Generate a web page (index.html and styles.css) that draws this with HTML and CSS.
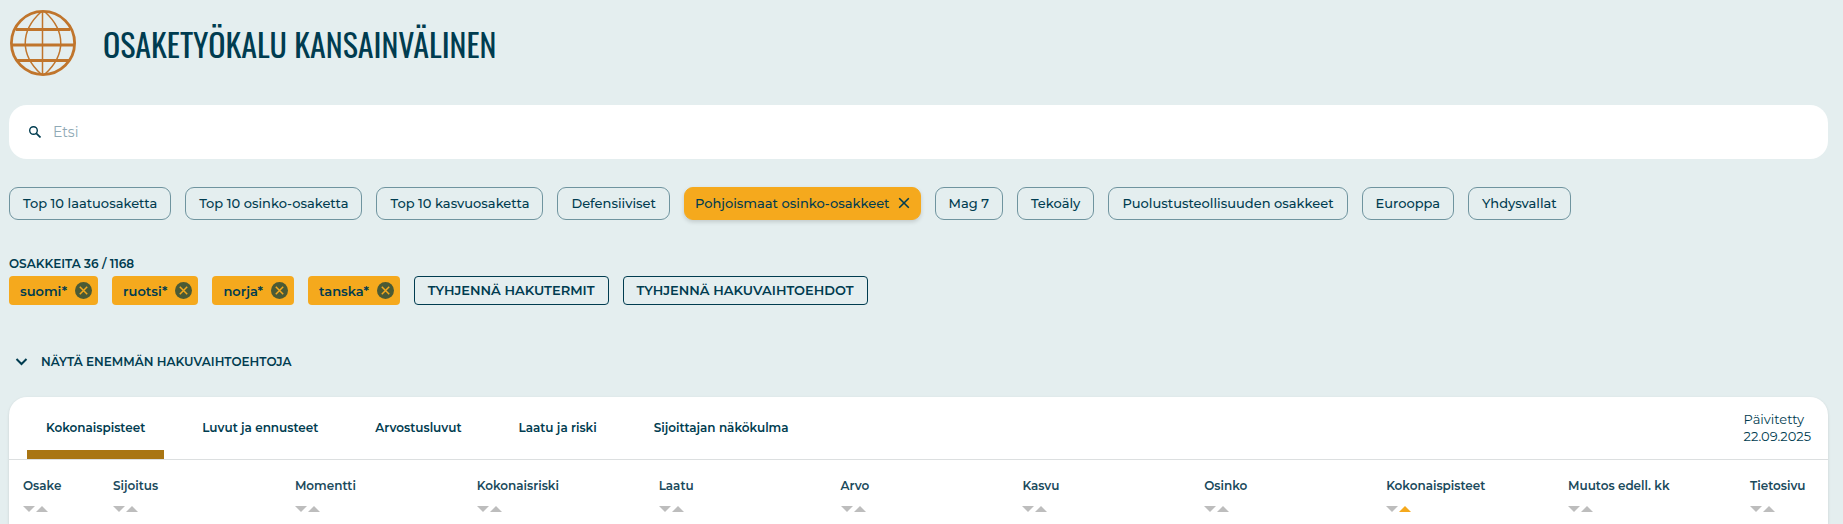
FILE: index.html
```
<!DOCTYPE html>
<html lang="fi">
<head>
    <meta charset="UTF-8">
    <meta name="viewport" content="width=device-width, initial-scale=1">
    <title>Osaketyökalu kansainvälinen</title>
    <link rel="stylesheet" href="styles.css">
</head>
<body>
    <svg class="icons">
        <symbol id="cross" viewBox="0 0 10 10"><path d="M1 1l8 8M9 1l-8 8" fill="none" stroke="currentColor" stroke-width="1.3"/></symbol>
        <symbol id="round-cross" viewBox="0 0 16 16"><circle cx="8" cy="8" r="8" fill="#4a5a35"/><path d="M4.500 4.500l7 7M11.500 4.500l-7 7" fill="none" stroke="#f5a91d" stroke-width="1.4"/></symbol>
        <symbol id="down" viewBox="0 0 12 6"><path d="M0 0h12L6 6z" fill="currentColor"/></symbol>
        <symbol id="up" viewBox="0 0 12 6"><path d="M0 6h12L6 0z" fill="currentColor"/></symbol>
    </svg>

    <header class="header">
        <svg class="globe" viewBox="0 0 66 66" fill="none" stroke="#c0752c">
            <circle cx="33" cy="33" r="31.6" stroke-width="2.8"/>
            <path d="M6 19.500h54M6 50.500h54" stroke-width="3"/>
            <path d="M2 35h62" stroke-width="2.8"/>
            <path d="M32.500 2v62M31 2C10 21 10 45 31 64M35 2c21 19 21 43 0 62" stroke-width="1.5"/>
        </svg>
        <h1>OSAKETYÖKALU KANSAINVÄLINEN</h1>
    </header>

    <label class="search">
        <svg class="search-icon" viewBox="0 0 12 12" fill="none" stroke="currentColor"><circle cx="4.500" cy="4.500" r="3.800" stroke-width="1.400"/><path d="M7.300 7.300l4.200 4.200" stroke-width="1.700"/></svg>
        <input type="text" placeholder="Etsi" aria-label="Etsi">
    </label>

    <div class="chips">
        <button class="chip">Top 10 laatuosaketta</button>
        <button class="chip">Top 10 osinko-osaketta</button>
        <button class="chip">Top 10 kasvuosaketta</button>
        <button class="chip">Defensiiviset</button>
        <button class="chip active">Pohjoismaat osinko-osakkeet <svg class="cross"><use href="#cross"/></svg></button>
        <button class="chip">Mag 7</button>
        <button class="chip">Tekoäly</button>
        <button class="chip">Puolustusteollisuuden osakkeet</button>
        <button class="chip">Eurooppa</button>
        <button class="chip">Yhdysvallat</button>
    </div>

    <div class="count">OSAKKEITA 36 / 1168</div>
    <div class="tags">
        <button class="tag">suomi* <svg><use href="#round-cross"/></svg></button>
        <button class="tag">ruotsi* <svg><use href="#round-cross"/></svg></button>
        <button class="tag">norja* <svg><use href="#round-cross"/></svg></button>
        <button class="tag">tanska* <svg><use href="#round-cross"/></svg></button>
        <button class="tag clear">TYHJENNÄ HAKUTERMIT</button>
        <button class="tag clear">TYHJENNÄ HAKUVAIHTOEHDOT</button>
    </div>

    <button class="more">
        <svg class="chevron" viewBox="0 0 12 8"><path d="M1 1l5 5 5-5" fill="none" stroke="currentColor" stroke-width="2"/></svg>
        NÄYTÄ ENEMMÄN HAKUVAIHTOEHTOJA
    </button>

    <main class="panel">
        <div class="panel-top">
            <nav class="tabs">
                <button class="tab active">Kokonaispisteet</button>
                <button class="tab">Luvut ja ennusteet</button>
                <button class="tab">Arvostusluvut</button>
                <button class="tab">Laatu ja riski</button>
                <button class="tab">Sijoittajan näkökulma</button>
            </nav>
            <div class="updated">Päivitetty<br>22.09.2025</div>
        </div>
        <table>
            <thead>
                <tr>
                    <th class="stock">Osake<div class="sort"><svg><use href="#down"/></svg><svg><use href="#up"/></svg></div></th>
                    <th>Sijoitus<div class="sort"><svg><use href="#down"/></svg><svg><use href="#up"/></svg></div></th>
                    <th>Momentti<div class="sort"><svg><use href="#down"/></svg><svg><use href="#up"/></svg></div></th>
                    <th>Kokonaisriski<div class="sort"><svg><use href="#down"/></svg><svg><use href="#up"/></svg></div></th>
                    <th>Laatu<div class="sort"><svg><use href="#down"/></svg><svg><use href="#up"/></svg></div></th>
                    <th>Arvo<div class="sort"><svg><use href="#down"/></svg><svg><use href="#up"/></svg></div></th>
                    <th>Kasvu<div class="sort"><svg><use href="#down"/></svg><svg><use href="#up"/></svg></div></th>
                    <th>Osinko<div class="sort"><svg><use href="#down"/></svg><svg><use href="#up"/></svg></div></th>
                    <th>Kokonaispisteet<div class="sort"><svg><use href="#down"/></svg><svg class="on"><use href="#up"/></svg></div></th>
                    <th>Muutos edell. kk<div class="sort"><svg><use href="#down"/></svg><svg><use href="#up"/></svg></div></th>
                    <th class="info">Tietosivu<div class="sort"><svg><use href="#down"/></svg><svg><use href="#up"/></svg></div></th>
                </tr>
            </thead>
        </table>
    </main>
</body>
</html>
```
FILE: styles.css
```
* {
    box-sizing: border-box;
}
body {
    margin: 0;
    padding: 10px 15px 0 9px;
    background: #e4eeef;
    color: #003c50;
    font-family: Montserrat, Inter, sans-serif;
    font-size: 13px;
}
button {
    font: inherit;
    color: inherit;
    background: none;
    border: none;
    padding: 0;
    cursor: pointer;
    white-space: nowrap;
}
.icons {
    display: none;
}
.header {
    display: flex;
    align-items: center;
    gap: 27px;
    padding-left: 1px;
}
.globe {
    width: 66px;
    height: 66px;
}
h1 {
    margin: 2px 0 0;
    font-family: Oswald, "Liberation Sans Narrow", sans-serif;
    font-size: 32px;
    line-height: 40px;
    font-weight: 400;
}
.search {
    display: flex;
    align-items: center;
    gap: 12px;
    height: 54px;
    margin-top: 29px;
    padding: 0 20px;
    border-radius: 18px;
    background: #fff;
}
.search-icon {
    width: 12px;
    height: 12px;
}
.search input {
    flex: 1;
    padding: 0;
    border: none;
    outline: none;
    font: inherit;
    font-size: 14px;
}
.search input::placeholder {
    color: #8fa9b5;
}
.chips {
    display: flex;
    flex-wrap: wrap;
    gap: 14px;
    margin-top: 28px;
}
.chip {
    display: flex;
    align-items: center;
    height: 33px;
    padding: 0 13px 1px;
    border: 1px solid #6f949f;
    border-radius: 9px;
    font-weight: 500;
}
.chip.active {
    gap: 8px;
    padding: 0 10px 1px;
    border-color: #f5a91d;
    background: #f5a91d;
    box-shadow: 0 2px 4px rgba(0, 0, 0, 0.15);
}
.cross {
    width: 12px;
    height: 12px;
}
.count {
    margin-top: 36px;
    font-size: 12px;
    line-height: 16px;
    font-weight: 600;
}
.tags {
    display: flex;
    flex-wrap: wrap;
    gap: 14px;
    margin-top: 4px;
}
.tag {
    display: flex;
    align-items: center;
    gap: 8px;
    height: 29px;
    padding: 0 6px 0 11px;
    border-radius: 4px;
    background: #f5a91d;
    font-weight: 600;
}
.tag svg {
    width: 17px;
    height: 17px;
}
.tag.clear {
    padding: 0 13px 1px;
    border: 1px solid #003c50;
    background: none;
}
.more {
    display: flex;
    align-items: center;
    gap: 13px;
    margin-top: 49px;
    padding-left: 6px;
    font-size: 12px;
    line-height: 16px;
    font-weight: 600;
}
.chevron {
    width: 13px;
    height: 8px;
}
.panel {
    margin-top: 27px;
    border-radius: 18px 18px 0 0;
    background: #fff;
    box-shadow: 0 1px 3px rgba(0, 0, 0, 0.12);
}
.panel-top {
    display: flex;
    justify-content: space-between;
    height: 63px;
    padding: 0 17px 0 18px;
    border-bottom: 1px solid #dcdfe0;
}
.tabs {
    display: flex;
    gap: 19px;
}
.tab {
    padding: 8px 19px 0;
    border-bottom: 9px solid transparent;
    font-size: 12px;
    font-weight: 600;
}
.tab.active {
    border-bottom-color: #a97512;
}
.updated {
    padding-top: 14px;
    line-height: 17px;
}
table {
    width: 100%;
    table-layout: fixed;
    border-collapse: collapse;
}
th {
    padding: 18px 0 12px 14px;
    font-size: 12px;
    line-height: 16px;
    font-weight: 600;
    text-align: left;
    white-space: nowrap;
    color: #1a4a5c;
}
.stock {
    width: 90px;
}
.info {
    width: 92px;
}
.sort {
    display: flex;
    gap: 1px;
    margin-top: 12px;
    color: #bdbdbd;
}
.sort svg {
    width: 12px;
    height: 6px;
}
.sort .on {
    color: #f5a91d;
}
```
